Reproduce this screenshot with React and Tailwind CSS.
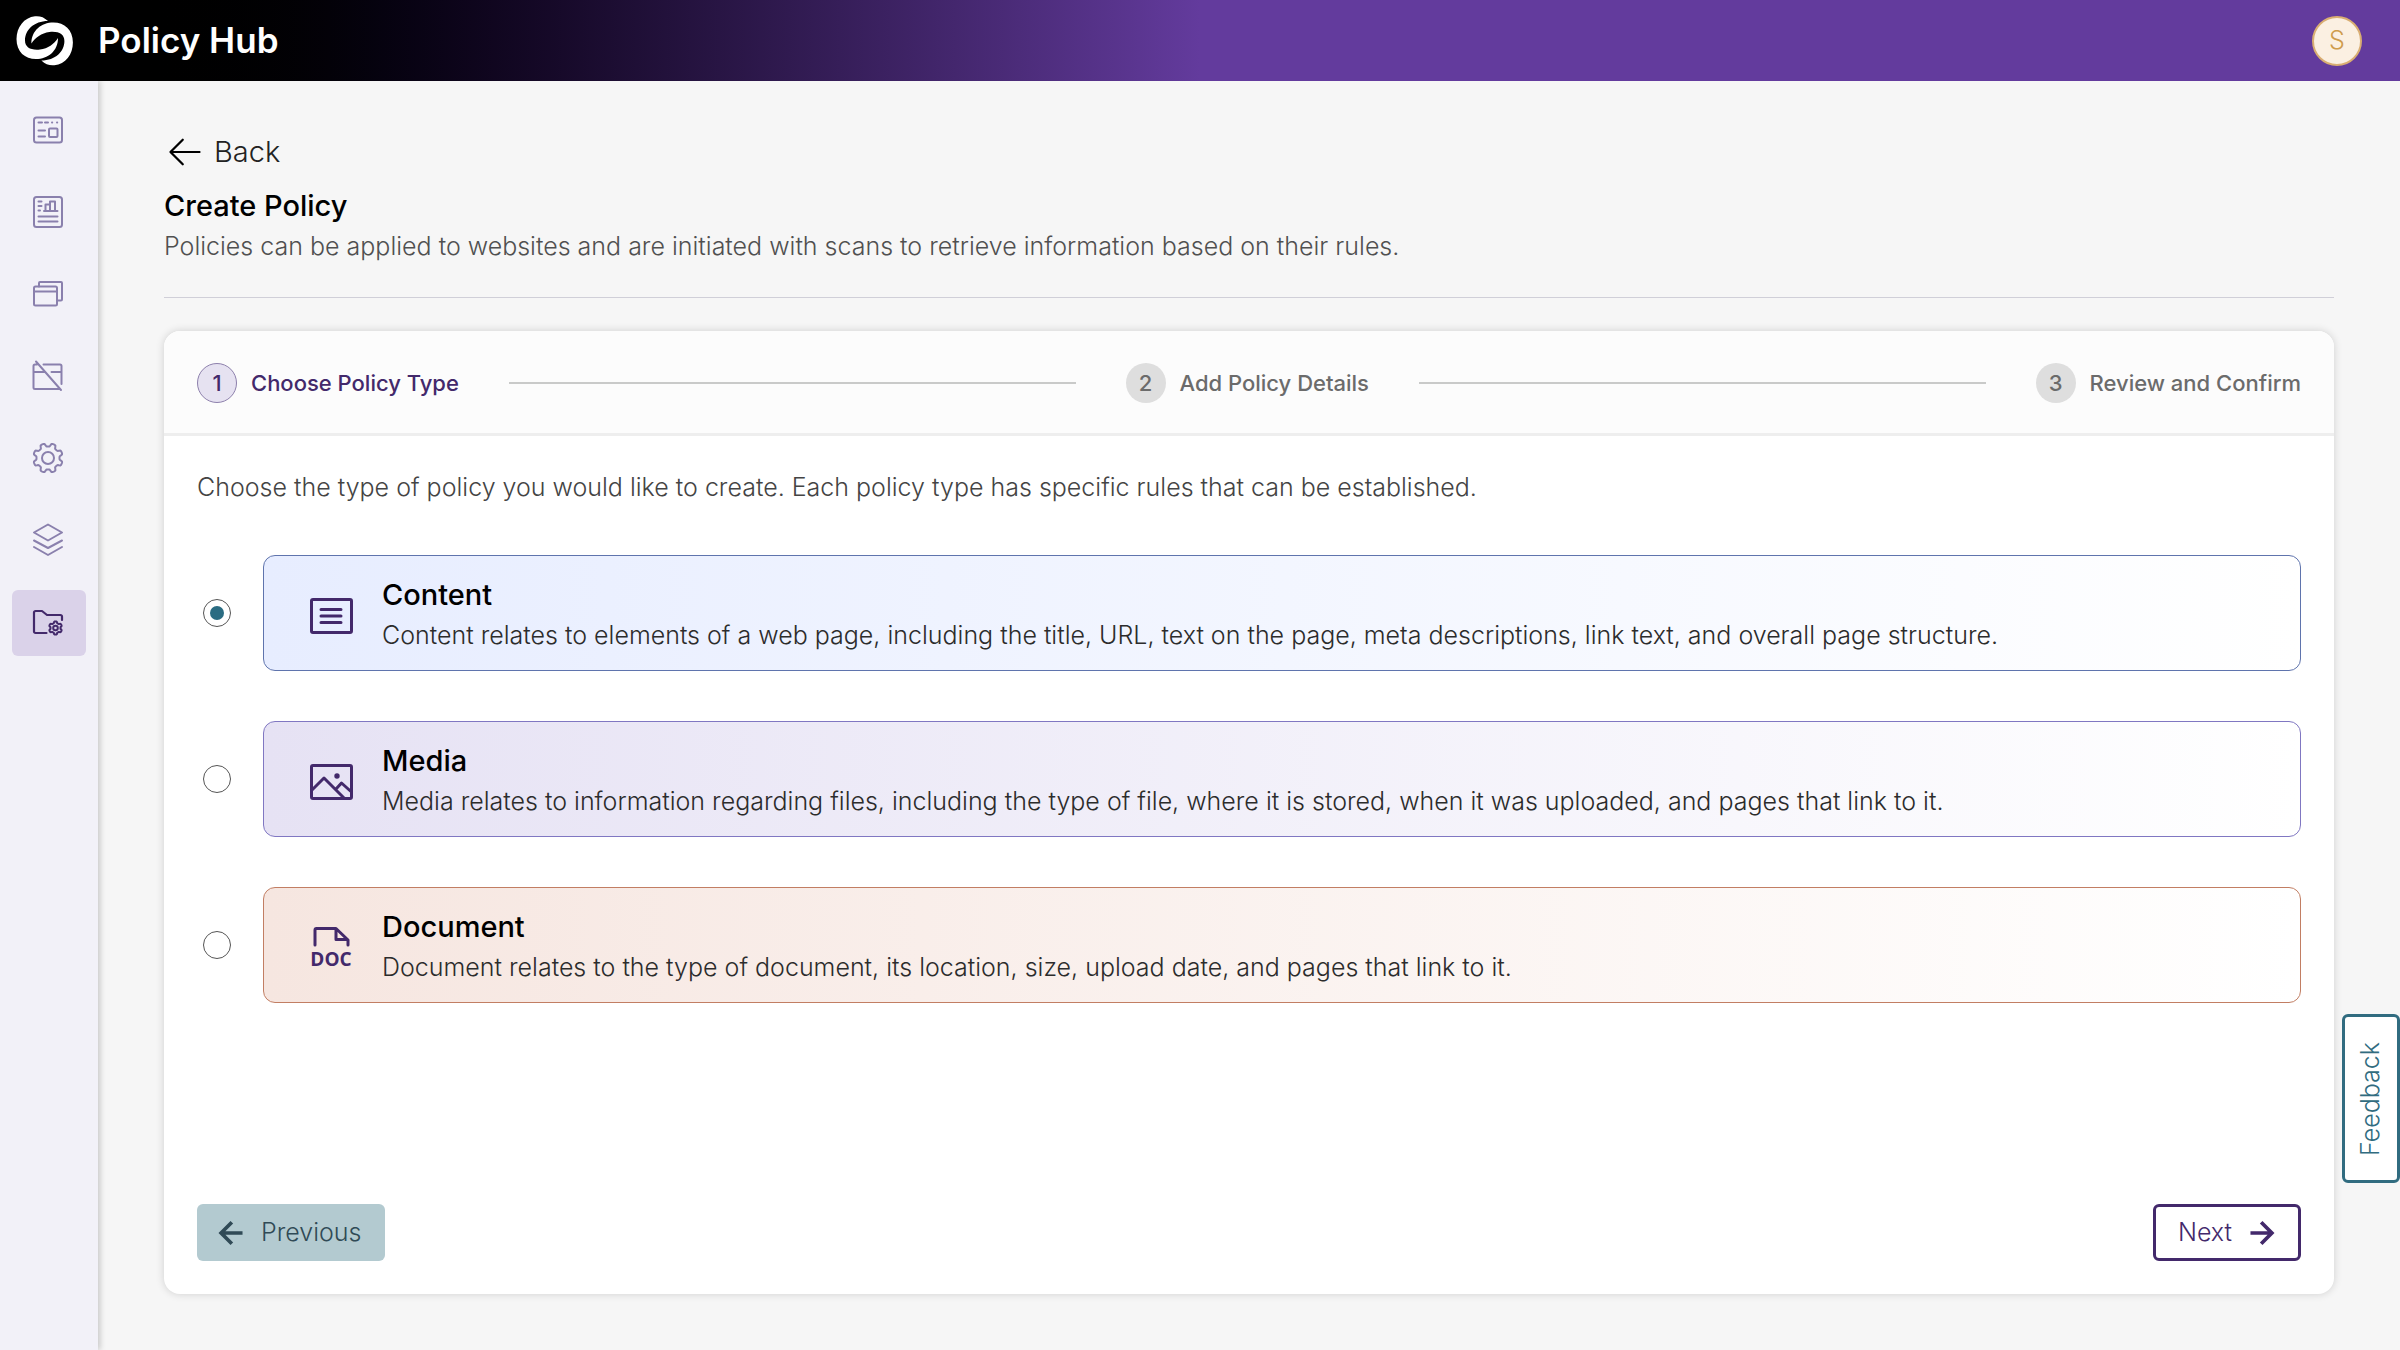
import React from "react";

function Svg({ size = 34, children, ...rest }) {
  return (
    <svg width={size} height={size} viewBox="0 0 34 34" fill="none" stroke="currentColor" strokeWidth="2" strokeLinecap="round" strokeLinejoin="round" aria-hidden="true" {...rest}>
      {children}
    </svg>
  );
}

const gearPath = (cx, cy, rOuter, rInner, teeth) => {
  const n = 128;
  const mid = (rOuter + rInner) / 2;
  const amp = (rOuter - rInner) / 2;
  let d = "";
  for (let i = 0; i < n; i++) {
    const a = (i / n) * Math.PI * 2;
    const s = Math.cos(teeth * a + Math.PI);
    const r = mid + amp * Math.tanh(2.6 * s);
    d += (i ? "L" : "M") + (cx + r * Math.cos(a)).toFixed(2) + " " + (cy + r * Math.sin(a)).toFixed(2);
  }
  return d + "Z";
};

const navItems = [
  {
    label: "Overview",
    icon: (
      <>
        <rect x="3" y="4.500" width="28" height="25" rx="2.5" />
        <path d="M7.500 9.500h3.500M14 9.500h3M21 9.500h.2M26 9.500h.2M7.500 17.500h6.500M7.500 23.500h6.500" />
        <rect x="18" y="15.500" width="8.500" height="8.500" rx="1" />
      </>
    ),
  },
  {
    label: "Reports",
    icon: (
      <>
        <rect x="3" y="2" width="28" height="30" rx="2.500" />
        <path d="M7.500 6.500h3M7.500 11h3M7.500 15.500h1.500M7.500 21.500h19M7.500 26.500h19M13 16h13.500M14.500 16V9.500h4.500V16M19 16V6.500h5V16" />
      </>
    ),
  },
  {
    label: "Pages",
    icon: (
      <>
        <rect x="3" y="9.500" width="23" height="19" rx="1.500" />
        <path d="M3 14.500h23M8 9.500V6a1 1 0 0 1 1-1h21a1 1 0 0 1 1 1v16.500a1 1 0 0 1-1 1h-4" />
      </>
    ),
  },
  {
    label: "Excluded pages",
    icon: (
      <path d="M5 2.500l25 28.500M6 5.500H4A1.500 1.500 0 0 0 2.500 7v21.500A1.500 1.500 0 0 0 4 30h25M12.500 5.500H29A1.500 1.500 0 0 1 30.500 7v18M2.500 13h11.500M20.500 13h10" />
    ),
  },
  {
    label: "Settings",
    icon: (
      <>
        <path d={gearPath(17, 17, 14.8, 11.5, 8)} />
        <circle cx="17" cy="17" r="6" />
      </>
    ),
  },
  {
    label: "Layers",
    icon: <path d="M17 1.500l14 8-14 8-14-8zM3 17.500l14 7.500 14-7.500M3 24l14 8 14-8" />,
  },
  {
    label: "Policies",
    active: true,
    icon: (
      <>
        <path d="M15.500 28H4.500A1.500 1.500 0 0 1 3 26.500V7.500A1.500 1.500 0 0 1 4.500 6H11l5 4h13.500A1.500 1.500 0 0 1 31 11.500V15" strokeWidth="2.200" />
        <path d={gearPath(24.5, 23, 6.6, 5, 6)} />
        <circle cx="24.500" cy="23" r="2.300" />
      </>
    ),
  },
];

const swirl = "M32 6C28 2 24 .8 19 1.200 8 2.500.5 12 .5 24 .5 37 9 44 20 44c12 0 22-8 22-21-4 6-10 10.500-18 11.500-9 1-15-2-15-9C9 15 18 6 32 6Z";

function Logo() {
  return (
    <svg width="58" height="52" viewBox="0 0 58 52" fill="#fff" aria-hidden="true">
      <path d={swirl} />
      <path d={swirl} transform="rotate(180 28.7 25.7)" />
    </svg>
  );
}

const options = [
  {
    id: "content",
    title: "Content",
    text: "Content relates to elements of a web page, including the title, URL, text on the page, meta descriptions, link text, and overall page structure.",
    style: "border-[#5f74ad] from-[#e7edff]",
    icon: (
      <>
        <rect x="2.500" y="5.500" width="40" height="33" rx="1.500" />
        <path d="M12 15.500h20M12 22h20M12 28.500h20" />
      </>
    ),
  },
  {
    id: "media",
    title: "Media",
    text: "Media relates to information regarding files, including the type of file, where it is stored, when it was uploaded, and pages that link to it.",
    style: "border-[#8077c2] from-[#e6e2f4]",
    icon: (
      <>
        <rect x="2.500" y="5.500" width="40" height="33" rx="1.500" />
        <path d="M3 30l12-12 20 20M27 29l5.500-6 10 9" />
        <circle cx="28" cy="16" r="1.200" fill="currentColor" />
      </>
    ),
  },
  {
    id: "document",
    title: "Document",
    text: "Document relates to the type of document, its location, size, upload date, and pages that link to it.",
    style: "border-[#c27e63] from-[#f6e6e0]",
    icon: (
      <>
        <path d="M6 19V4a1.500 1.500 0 0 1 1.500-1.500H27L39 14v5M27 3v10.500h11" />
        <text x="22" y="40" textAnchor="middle" fill="#43296b" stroke="none" className="font-['Open_Sans',sans-serif] text-[19px] font-bold">
          DOC
        </text>
      </>
    ),
  },
];

function Step({ number, label, active }) {
  return (
    <li className={active ? "flex shrink-0 items-center gap-3.5 text-[#43296b]" : "flex shrink-0 items-center gap-3.5 text-[#6b6b6b]"} aria-current={active ? "step" : undefined}>
      <span className={active ? "flex size-10 items-center justify-center rounded-full border border-[#8d80ac] bg-[#e6e2f1]" : "flex size-10 items-center justify-center rounded-full bg-[#dedede]"}>
        {number}
      </span>
      <span>{label}</span>
    </li>
  );
}

function StepLine() {
  return <li aria-hidden="true" className="h-0.5 flex-1 bg-[#c9cac9]" />;
}

export default function App() {
  return (
    <div className="flex min-h-screen flex-col bg-[#f6f6f6] font-['Inter',sans-serif] text-[25px] font-light text-black">
      <header className="flex h-[81px] items-center bg-linear-to-r from-black from-5% to-[#633b9d] to-50% pr-[38px] pl-4">
        <Logo />
        <h1 className="ml-6 text-[35px] font-semibold text-white">Policy Hub</h1>
        <button type="button" aria-label="Account" className="ml-auto flex size-[50px] items-center justify-center rounded-full border-2 border-[#d9ae72] bg-[#fbf0e2] text-[#cf9c4c]">
          S
        </button>
      </header>

      <div className="flex flex-1">
        <nav aria-label="Main" className="flex w-[98px] shrink-0 flex-col items-center gap-4 bg-[#f2f1f8] pt-[17px] shadow-[2px_0_6px_rgba(0,0,0,0.2)]">
          {navItems.map((item) => (
            <a key={item.label} href="#" aria-label={item.label} className={item.active ? "flex h-[66px] w-[74px] items-center justify-center rounded-md bg-[#dad2e9] pr-0.5 pb-0.5 text-[#43296b]" : "flex h-[66px] w-[74px] items-center justify-center rounded-md pr-0.5 pb-0.5 text-[#8a80ad]"}>
              <Svg>{item.icon}</Svg>
            </a>
          ))}
        </nav>

        <main className="flex min-w-0 flex-1 flex-col px-[66px] pt-[51px] pb-14">
          <a href="#" className="flex items-center gap-2.5 self-start pl-0.5 text-[29px] leading-10 text-[#222]">
            <Svg size={38} stroke="#000" strokeWidth="2">
              <path d="M30 17H4M15 6L4 17l11 11" />
            </Svg>
            Back
          </a>
          <h2 className="mt-3.5 text-[29px] leading-10 font-medium">Create Policy</h2>
          <p className="leading-10 text-[#505050]">Policies can be applied to websites and are initiated with scans to retrieve information based on their rules.</p>
          <hr className="mt-[31px] border-[#d0cfd8]" />

          <section className="mt-[33px] flex flex-1 flex-col rounded-2xl bg-white shadow-[0_0_8px_rgba(0,0,0,0.16)]">
            <ol className="flex h-[105px] items-center gap-[50px] rounded-t-2xl border-b-3 border-[#eeeeee] bg-[#fcfcfc] px-[33px] pt-0.5 text-[22px] font-medium">
              <Step number="1" label="Choose Policy Type" active />
              <StepLine />
              <Step number="2" label="Add Policy Details" />
              <StepLine />
              <Step number="3" label="Review and Confirm" />
            </ol>

            <form className="flex flex-1 flex-col p-[33px] pt-[31px]">
              <p className="leading-10 text-[#444]">Choose the type of policy you would like to create. Each policy type has specific rules that can be established.</p>
              <div className="mt-12 flex flex-col gap-[50px]">
                {options.map((o, i) => (
                  <div key={o.id} className="flex items-center gap-8">
                    <input id={o.id} type="radio" name="policy-type" defaultChecked={i === 0} className="ml-1.5 size-7 shrink-0 appearance-none rounded-full border border-[#555] bg-white bg-clip-content p-1.5 checked:bg-[#2a6c82]" />
                    <label htmlFor={o.id} className={"flex h-[116px] flex-1 items-center gap-7 rounded-xl border bg-linear-to-r to-white pl-[45px] " + o.style}>
                      <svg width="45" height="56" viewBox="0 -6 45 56" fill="none" stroke="#43296b" strokeWidth="3" strokeLinecap="round" strokeLinejoin="round" aria-hidden="true" className="mt-1.5 shrink-0">
                        {o.icon}
                      </svg>
                      <span className="flex flex-col pt-1">
                        <span className="text-[29px] leading-10 font-medium">{o.title}</span>
                        <span className="leading-10 text-[#2c2c2c]">{o.text}</span>
                      </span>
                    </label>
                  </div>
                ))}
              </div>

              <div className="mt-auto flex justify-between">
                <button type="button" disabled className="flex h-[57px] items-center gap-4 rounded-md bg-[#b3cad0] pr-6 pl-5 text-[#304a56]">
                  <Svg size={28} strokeWidth="4.500" strokeLinecap="butt" strokeLinejoin="miter">
                    <path d="M31 17H5M18 4L5 17l13 13" />
                  </Svg>
                  Previous
                </button>
                <button type="button" className="flex h-[57px] items-center gap-4 rounded-md border-3 border-[#43296b] px-[22px] text-[#43296b]">
                  Next
                  <Svg size={28} strokeWidth="4.500" strokeLinecap="butt" strokeLinejoin="miter">
                    <path d="M3 17h26M16 4l13 13-13 13" />
                  </Svg>
                </button>
              </div>
            </form>
          </section>
        </main>
      </div>

      <button type="button" className="fixed right-0 bottom-[167px] flex h-[169px] w-[58px] items-center justify-center rounded-md border-3 border-[#316c80] bg-white text-[#316c80]">
        <span className="rotate-180 [writing-mode:vertical-rl]">Feedback</span>
      </button>
    </div>
  );
}
